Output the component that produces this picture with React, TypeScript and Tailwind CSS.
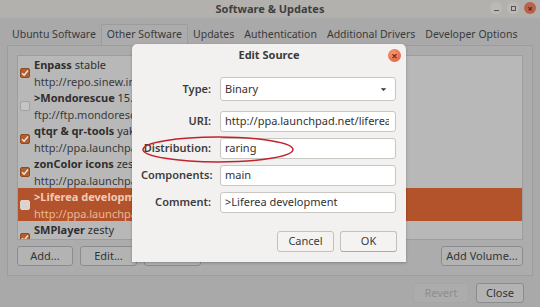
import { ChevronDown } from "lucide-react"

const font = { fontFamily: '"Noto Sans", "DejaVu Sans", sans-serif' }

const sources = [
  { name: "Enpass", suite: "stable", url: "http://repo.sinew.in/", checked: true },
  { name: ">Mondorescue", suite: "15.10", url: "ftp://ftp.mondorescue.org/", checked: false },
  { name: "qtqr & qr-tools", suite: "yakkety", url: "http://ppa.launchpad.net/", checked: true },
  { name: "zonColor icons", suite: "zesty", url: "http://ppa.launchpad.net/", checked: true },
  { name: ">Liferea development", suite: "", url: "http://ppa.launchpad.net/", checked: false, selected: true },
  { name: "SMPlayer", suite: "zesty", url: "http://ppa.launchpad.net/", checked: true },
]

const tabs = ["Ubuntu Software", "Other Software", "Updates", "Authentication", "Additional Drivers", "Developer Options"]

function Check({ on, light }: { on: boolean; light?: boolean }) {
  if (on) {
    return (
      <div className="w-[10px] h-[10px] rounded-[2px] bg-[#b0602f] border border-[#8f4a22] flex items-center justify-center shrink-0">
        <svg width="8" height="8" viewBox="0 0 8 8">
          <path d="M1 4.2 L3.1 6.2 L7 1.6" fill="none" stroke="#f3e3d6" strokeWidth="1.5" />
        </svg>
      </div>
    )
  }
  return (
    <div
      className={`w-[10px] h-[10px] rounded-[2px] border shrink-0 ${
        light ? "bg-[#d9d4d0] border-[#e2d4cc]" : "bg-[#c4c4c4] border-[#a2a2a2]"
      }`}
    />
  )
}

function DimButton({ label, w, disabled }: { label: string; w: string; disabled?: boolean }) {
  return (
    <div
      className={`${w} h-[20px] rounded-[3px] border flex items-center justify-center text-[11px] ${
        disabled ? "border-[#a6a6a6] text-[#8e8e8e] bg-[#acacac]" : "border-[#8c8c8c] text-[#333] bg-[#b3b3b3]"
      }`}
    >
      {label}
    </div>
  )
}

function Field({ label, value, top, className }: { label: string; value: string; top?: boolean; className?: string }) {
  return (
    <div className={`flex items-center ${className ?? ""}`}>
      <div className="w-[79px] text-right pr-[9px] text-[11px] font-semibold text-[#3c3c3c] whitespace-nowrap">
        {label}
      </div>
      <div
        className={`w-[176px] ${
          top ? "h-[24px]" : "h-[21px]"
        } bg-white border border-[#c9c6c2] rounded-[3px] flex items-center pl-[4px] pr-[6px] text-[11px] text-[#333] overflow-hidden whitespace-nowrap`}
      >
        <span className="flex-1 overflow-hidden">{value}</span>
        {top && <ChevronDown className="w-[11px] h-[11px] text-[#333]" strokeWidth={0} fill="#333" />}
      </div>
    </div>
  )
}

export default function App() {
  return (
    <div className="relative w-[540px] h-[307px] bg-[#a9a9a9] overflow-hidden flex flex-col" style={font}>
      {/* title bar */}
      <div className="relative h-[18px] bg-[#b3b1ae] flex items-center justify-center">
        <span className="text-[11px] font-bold text-[#3f3f3f]">Software &amp; Updates</span>
        <div className="absolute right-[4px] top-[2px] flex items-center gap-[5px]">
          <div className="w-[12px] h-[12px] rounded-full bg-[#bcbab6] flex items-end justify-center pb-[3px]">
            <div className="w-[5px] h-[1px] bg-[#555]" />
          </div>
          <div className="w-[12px] h-[12px] rounded-full bg-[#bcbab6] flex items-center justify-center">
            <div className="w-[5px] h-[5px] border border-[#555]" />
          </div>
          <div className="w-[12px] h-[12px] rounded-full bg-[#b8634a] flex items-center justify-center text-[9px] leading-none text-[#4a2418] font-bold">
            ×
          </div>
        </div>
      </div>

      {/* tabs */}
      <div className="h-[27px] flex items-end pl-[7px] text-[10.5px] text-[#3a3a3a]">
        {tabs.map((t, i) => (
          <div
            key={t}
            className={`h-[21px] flex items-center px-[5px] whitespace-nowrap ${
              i === 1 ? "border border-b-0 border-[#9c9c9c] bg-[#acacac] rounded-t-[2px]" : ""
            }`}
          >
            {t}
          </div>
        ))}
      </div>

      {/* notebook page */}
      <div className="mx-[7px] h-[231px] border border-[#9c9c9c] bg-[#acacac] flex flex-col px-[9px] pt-[9px]">
        <div className="h-[185px] border border-[#9d9d9d] bg-[#b8b8b8] overflow-hidden">
          {sources.map((s) => (
            <div
              key={s.name}
              className={`h-[33px] flex items-center pl-[2px] gap-[4px] ${s.selected ? "bg-[#b2532b]" : ""}`}
            >
              <Check on={s.checked} light={s.selected} />
              <div className="flex flex-col leading-[17px] text-[11px] whitespace-nowrap">
                <div className={s.selected ? "text-[#f2cbb5]" : "text-[#2f2f2f]"}>
                  <span className="font-bold">{s.name}</span> {s.suite}
                </div>
                <div className={s.selected ? "text-[#eab79b]" : "text-[#3a3a3a]"}>{s.url}</div>
              </div>
            </div>
          ))}
        </div>
        <div className="flex items-center mt-[6px]">
          <div className="flex gap-[7px]">
            <DimButton label="Add..." w="w-[56px]" />
            <DimButton label="Edit..." w="w-[57px]" />
            <DimButton label="Remove" w="w-[57px]" />
          </div>
          <div className="ml-auto">
            <DimButton label="Add Volume..." w="w-[82px]" />
          </div>
        </div>
      </div>

      {/* bottom buttons */}
      <div className="flex justify-end gap-[7px] pr-[16px] mt-[7px]">
        <DimButton label="Revert" w="w-[56px]" disabled />
        <DimButton label="Close" w="w-[48px]" />
      </div>

      {/* Edit Source dialog */}
      <div className="absolute left-[132px] top-[44px] w-[274px] h-[218px] bg-[#f2f1f0] rounded-t-[5px] shadow-[0_1px_3px_rgba(0,0,0,0.25)] flex flex-col">
        <div className="relative h-[22px] flex items-center justify-center">
          <span className="text-[11px] font-bold text-[#3c3c3c]">Edit Source</span>
          <div className="absolute right-[5px] top-[5px] w-[13px] h-[13px] rounded-full bg-[radial-gradient(circle_at_40%_35%,#f59a78,#e2552f)] flex items-center justify-center">
            <span className="text-[11px] leading-none font-bold text-[#7a2a14] -mt-[1px]">×</span>
          </div>
        </div>
        <div className="flex flex-col gap-[6px] pl-[9px] mt-[11px]">
          <Field label="Type:" value="Binary" top />
          <Field label="URI:" value="http://ppa.launchpad.net/liferea/daily/ubuntu" className="mt-[4px]" />
          <Field label="Distribution:" value="raring" />
          <Field label="Components:" value="main" />
          <Field label="Comment:" value=">Liferea development" />
        </div>
        <div className="flex justify-end gap-[6px] pr-[9px] mt-[18px]">
          <div className="w-[57px] h-[21px] rounded-[3px] border border-[#c4c1bd] bg-[#f4f3f2] flex items-center justify-center text-[11px] text-[#3c3c3c]">
            Cancel
          </div>
          <div className="w-[57px] h-[21px] rounded-[3px] border border-[#c4c1bd] border-b-[#e8907c] bg-[#f4f3f2] flex items-center justify-center text-[11px] text-[#3c3c3c]">
            OK
          </div>
        </div>
      </div>

      {/* red annotation ellipse */}
      <svg className="absolute left-[140px] top-[134px]" width="158" height="32" viewBox="0 0 158 32">
        <ellipse cx="78" cy="15.5" rx="75" ry="12.5" fill="none" stroke="#c2222c" strokeWidth="1.5" />
      </svg>
    </div>
  )
}
